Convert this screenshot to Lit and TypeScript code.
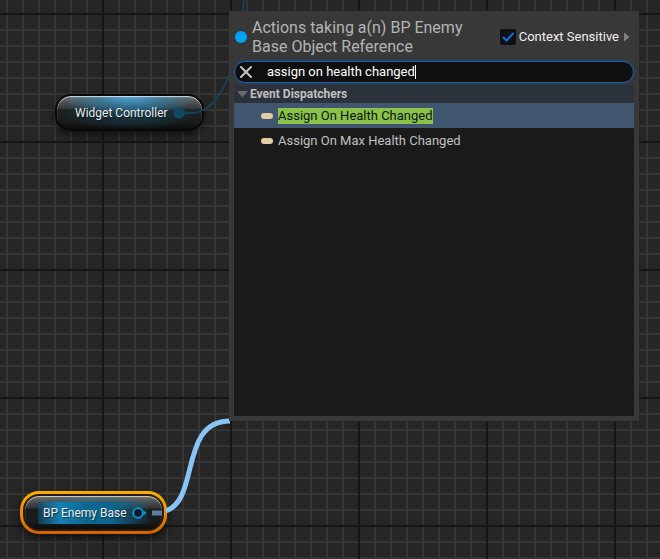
import { LitElement, html, css } from "lit";
import { customElement, property, state } from "lit/decorators.js";
import { classMap } from "lit/directives/class-map.js";

@customElement("graph-node")
class GraphNode extends LitElement {
  @property() label = "";
  @property({ type: Boolean, reflect: true }) selected = false;

  static styles = css`
    :host {
      display: block;
      box-sizing: border-box;
      border-radius: 17px;
      box-shadow: 0 4px 8px rgba(0, 0, 0, 0.6);
    }
    :host([selected]) {
      padding: 3px;
      border-radius: 19px;
      background: linear-gradient(#f5b000, #e88a08 55%, #cf6200);
    }
    .body {
      display: flex;
      align-items: center;
      gap: 5px;
      box-sizing: border-box;
      height: 37px;
      padding: 0 12px 0 18px;
      border: 2px solid #080808;
      border-radius: 16px;
      color: #ececec;
      font: 12px/16px Roboto, sans-serif;
      background:
        radial-gradient(ellipse 48% 60% at 50% 0, rgba(76, 165, 212, 1), rgba(60, 140, 185, 0.6) 50%, rgba(50, 120, 160, 0) 100%),
        radial-gradient(ellipse 48% 60% at 50% 45%, rgba(22, 75, 98, 0.8), rgba(20, 60, 80, 0) 100%),
        linear-gradient(rgba(125, 125, 125, 0.8), rgba(55, 58, 60, 0.8) 38%, rgba(26, 31, 30, 0.85) 40%, rgba(22, 26, 24, 0.9) 80%, #0b0b0b);
      box-shadow: inset 0 1px 1px rgba(235, 235, 235, 0.85);
    }
    :host([selected]) .body {
      padding: 0 12px 0 18px;
      border-color: #2a1a08;
      background:
        linear-gradient(90deg, rgba(14, 80, 112, 0.6), #1580b0 20%, #0d668f 45%, #0d668f 65%, rgba(12, 90, 128, 0.15)) 13px 6px / calc(100% - 27px) 22px no-repeat,
        radial-gradient(ellipse 45% 40% at 50% 10%, rgba(50, 110, 140, 0.6), transparent),
        linear-gradient(#6c6c6c, #2f3335 36%, #191c1c 40%, #1c1c1c 75%, #0b0b0b);
      box-shadow: inset 0 1px 1px rgba(240, 222, 185, 0.9);
    }
    .label {
      white-space: nowrap;
      text-shadow: 1px 1px 1px rgba(0, 0, 0, 0.5);
    }
    .pin {
      flex: none;
      display: block;
    }
  `;

  render() {
    return html`<div class="body">
      <span class="label">${this.label}</span>
      ${this.selected
        ? html`<svg class="pin" width="15" height="12" viewBox="0 0 15 12">
            <circle cx="6" cy="6" r="4.8" fill="#071c2a" stroke="#0c9be0" stroke-width="1.8" />
            <path d="M11.5 3.5 14.5 6 11.5 8.5z" fill="#0c9be0" />
          </svg>`
        : html`<svg class="pin" width="15" height="12" viewBox="0 0 15 12">
            <circle cx="6" cy="6" r="5.6" fill="#0f4964" />
            <path d="M11.5 3.5 14.5 6 11.5 8.5z" fill="#0f4964" />
          </svg>`}
    </div>`;
  }
}

@customElement("action-menu")
class ActionMenu extends LitElement {
  @state() private active = 0;
  private items = ["Assign On Health Changed", "Assign On Max Health Changed"];

  static styles = css`
    :host {
      display: flex;
      flex-direction: column;
      box-sizing: border-box;
      padding: 6px 5px 5px;
      background: #383838;
      font: 13px/16px Roboto, sans-serif;
      color: #c0c0c0;
    }
    .head {
      display: flex;
      align-items: center;
      gap: 5px;
      padding: 1px 4px 5px 1px;
    }
    .type {
      flex: none;
      width: 12px;
      height: 12px;
      border-radius: 50%;
      background: #00a2f4;
    }
    .title {
      flex: 1;
      margin: 0;
      padding-right: 24px;
      font-size: 16px;
      line-height: 19px;
      font-weight: 400;
      color: #b4b4b4;
    }
    .context {
      display: flex;
      align-items: center;
      gap: 3px;
      color: #f0f0f0;
      white-space: nowrap;
    }
    .check {
      appearance: none;
      display: block;
      width: 16px;
      height: 16px;
      margin: 0;
      border-radius: 2px;
      background: #101010;
    }
    .box {
      display: grid;
    }
    .box > * {
      grid-area: 1 / 1;
    }
    .tick {
      visibility: hidden;
      pointer-events: none;
    }
    .check:checked + .tick {
      visibility: visible;
    }
    button {
      display: block;
      padding: 0;
      border: 0;
      background: none;
      color: inherit;
      font: inherit;
      text-align: left;
    }
    svg {
      display: block;
    }
    .search {
      display: flex;
      align-items: center;
      box-sizing: border-box;
      height: 22px;
      padding: 0 5px;
      border: 1px solid #0a68cc;
      border-radius: 11px;
      background: #0f0f0f;
    }
    .query {
      field-sizing: content;
      margin: 0 0 0 15px;
      padding: 0;
      border: 0;
      outline: 0;
      background: none;
      color: #fff;
      font: inherit;
    }
    .caret {
      width: 1px;
      height: 14px;
      background: #fff;
    }
    .list {
      flex: 1;
      margin-top: 2px;
      background: #1a1a1a;
    }
    .group {
      display: flex;
      align-items: center;
      gap: 2px;
      width: 100%;
      height: 18px;
      padding-left: 3px;
      background: #2b323b;
      font-size: 12px;
      font-weight: 700;
    }
    .item {
      display: flex;
      align-items: center;
      gap: 5px;
      width: 100%;
      height: 25px;
      padding-left: 27px;
    }
    .item.active {
      background: #40566f;
    }
    .pill {
      width: 12px;
      height: 6px;
      border-radius: 3px;
      background: #e3cba6;
    }
    .active .name {
      background: #8bc24a;
      color: #0c1408;
    }
  `;

  render() {
    return html`
      <div class="head">
        <span class="type"></span>
        <h1 class="title">Actions taking a(n) BP Enemy Base Object Reference</h1>
        <label class="context">
          <span class="box">
            <input class="check" type="checkbox" checked />
            <svg class="tick" width="16" height="16" viewBox="0 0 16 16">
              <path d="M3.5 8.5 6.5 11.5 13 4.5" fill="none" stroke="#0a74e6" stroke-width="2" stroke-linecap="round" />
            </svg>
          </span>
          Context Sensitive
        </label>
        <button aria-label="Context options">
          <svg width="6" height="10" viewBox="0 0 6 10"><path d="M0 .5 5.5 5 0 9.5z" fill="#808080" /></svg>
        </button>
      </div>
      <div class="search">
        <button aria-label="Clear search">
          <svg width="12" height="12" viewBox="0 0 12 12"><path d="M1 1 11 11M11 1 1 11" stroke="#c8c8c8" stroke-width="1.9" stroke-linecap="round" /></svg>
        </button>
        <input class="query" type="text" aria-label="Search actions" value="assign on health changed" spellcheck="false" />
        <span class="caret"></span>
      </div>
      <div class="list">
        <button class="group">
          <svg width="11" height="7" viewBox="0 0 11 7"><path d="M0 0H11L5.5 6.5z" fill="#686868" /></svg>
          Event Dispatchers
        </button>
        ${this.items.map(
          (name, i) => html`<button
            class=${classMap({ item: true, active: i === this.active })}
            @click=${() => (this.active = i)}
          >
            <span class="pill"></span><span class="name">${name}</span>
          </button>`
        )}
      </div>
    `;
  }
}

@customElement("app-root")
class AppRoot extends LitElement {
  static styles = css`
    :host {
      display: block;
      position: relative;
      min-height: 100vh;
      overflow: hidden;
      background:
        repeating-linear-gradient(90deg, #161616 0 2px, transparent 2px 128px) -26px 0 / calc(100% + 26px) 100%,
        repeating-linear-gradient(#161616 0 2px, transparent 2px 128px) 0 -115px / 100% calc(100% + 115px),
        repeating-linear-gradient(90deg, #353535 0 2px, transparent 2px 16px) -10px 0 / calc(100% + 10px) 100%,
        repeating-linear-gradient(#353535 0 2px, transparent 2px 16px) 0 -3px / 100% calc(100% + 3px),
        #262626;
    }
    .wires {
      position: absolute;
      top: 0;
      left: 0;
      width: 100%;
      height: 100%;
    }
    .widget,
    .enemy,
    .menu {
      position: absolute;
    }
    .widget {
      left: 55px;
      top: 94px;
      width: 149px;
    }
    .enemy {
      left: 20px;
      top: 491px;
      width: 147px;
    }
    .menu {
      left: 229px;
      top: 11px;
      width: 410px;
      height: 410px;
    }
  `;

  render() {
    return html`
      <graph-node class="widget" label="Widget Controller"></graph-node>
      <graph-node class="enemy" label="BP Enemy Base" selected></graph-node>
      <svg class="wires">
        <path d="M187 113H192C224 111 238 60 244 0" fill="none" stroke="#124358" stroke-width="2" />
        <path d="M152 513H162" fill="none" stroke="#5c7f9e" stroke-width="5" />
        <path d="M166 511C200 499 179 421 230 421" fill="none" stroke="#89c4f7" stroke-width="5" />
      </svg>
      <action-menu class="menu"></action-menu>
    `;
  }
}
